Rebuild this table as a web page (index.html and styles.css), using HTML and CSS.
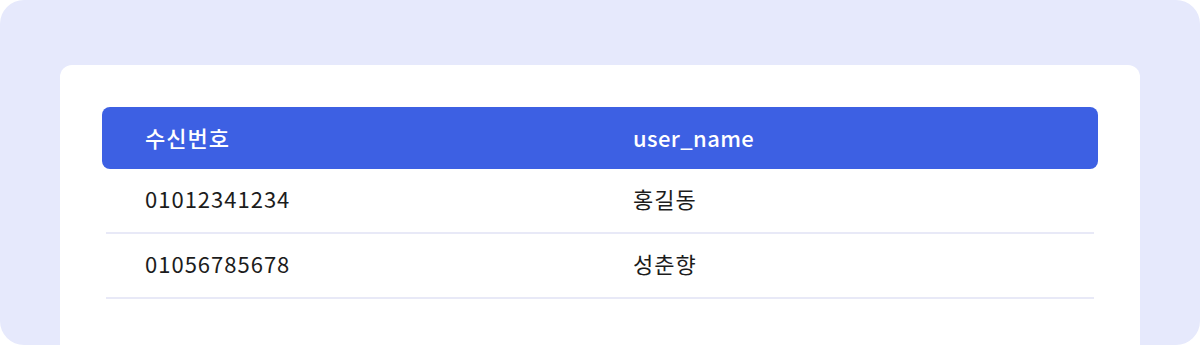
FILE: index.html
```html
<!DOCTYPE html>
<html lang="ko">
<head>
<meta charset="utf-8">
<meta name="viewport" content="width=device-width, initial-scale=1.0">
<link rel="stylesheet" href="styles.css">
</head>
<body>
<div class="frame">
  <div class="panel">
    <div class="table">
      <div class="head">
        <div class="cell">수신번호</div>
        <div class="cell latin">user_name</div>
      </div>
      <div class="body">
        <div class="row">
          <div class="cell">01012341234</div>
          <div class="cell">홍길동</div>
        </div>
        <div class="row">
          <div class="cell">01056785678</div>
          <div class="cell">성춘향</div>
        </div>
      </div>
    </div>
  </div>
</div>
</body>
</html>
```

FILE: styles.css
```css
html, body {
  margin: 0;
  padding: 0;
  background-color: #fff;
}
body {
  font-family: "Noto Sans CJK KR", "Noto Sans", sans-serif;
  color: #1c1c1c;
}
.frame {
  height: 345px;
  box-sizing: border-box;
  padding: 65px 60px 0;
  background-color: #e6e9fc;
  border-radius: 24px;
  overflow: hidden;
}
.panel {
  height: 100%;
  box-sizing: border-box;
  padding: 42px 42px 0;
  background-color: #fff;
  border-radius: 12px 12px 0 0;
}
.head, .row {
  display: grid;
  grid-template-columns: 488px 1fr;
  align-items: center;
}
.head {
  height: 62px;
  box-sizing: border-box;
  padding-left: 43px;
  padding-bottom: 1px;
  background-color: #3d60e3;
  border-radius: 8px;
  color: #fff;
  font-weight: 500;
}
.body {
  padding: 0 4px;
}
.row {
  height: 65px;
  box-sizing: border-box;
  padding-left: 39px;
  padding-bottom: 4px;
  border-bottom: 2px solid #e8e9f7;
}
.cell {
  font-size: 22px;
  line-height: 1.2;
  letter-spacing: 1px;
  white-space: nowrap;
}
.cell.latin {
  letter-spacing: 0.4px;
}
```
